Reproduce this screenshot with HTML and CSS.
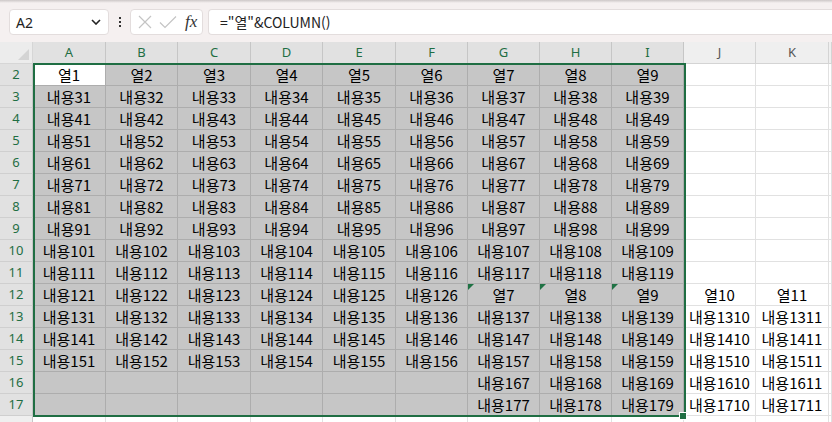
FILE: index.html
```html
<!DOCTYPE html>
<html lang="ko">
<head>
<meta charset="utf-8">
<title>Sheet</title>
<link rel="stylesheet" href="styles.css">
</head>
<body>
<div class="strip"></div>
<div class="fbar">
  <div class="namebox"><span>A2</span>
    <svg class="chev" width="10" height="6" viewBox="0 0 10 6"><path d="M1 1l4 4 4-4" fill="none" stroke="#222" stroke-width="1.6"/></svg>
  </div>
  <div class="dots"><i></i><i></i><i></i></div>
  <div class="fxbox">
    <svg width="16" height="16" viewBox="0 0 16 16"><path d="M2 2l12 12M14 2L2 14" stroke="#c4c4c4" stroke-width="1.2" fill="none"/></svg>
    <svg width="18" height="16" viewBox="0 0 18 16"><path d="M1 8.5l5 5 11-11" stroke="#c4c4c4" stroke-width="1.2" fill="none"/></svg>
    <span class="fx">fx</span>
  </div>
  <div class="formula">="열"&amp;COLUMN()</div>
</div>
<div class="sheet">
  <div class="corner"></div>
  <div class="ch s">A</div><div class="ch s">B</div><div class="ch s">C</div><div class="ch s">D</div><div class="ch s">E</div><div class="ch s">F</div><div class="ch s">G</div><div class="ch s">H</div><div class="ch s">I</div><div class="ch">J</div><div class="ch">K</div><div class="ch"></div>

  <div class="rh">2</div><div class="c a">열1</div><div class="c g">열2</div><div class="c g">열3</div><div class="c g">열4</div><div class="c g">열5</div><div class="c g">열6</div><div class="c g">열7</div><div class="c g">열8</div><div class="c g gr">열9</div><div class="c"></div><div class="c"></div><div class="c"></div>

  <div class="rh">3</div><div class="c g">내용31</div><div class="c g">내용32</div><div class="c g">내용33</div><div class="c g">내용34</div><div class="c g">내용35</div><div class="c g">내용36</div><div class="c g">내용37</div><div class="c g">내용38</div><div class="c g gr">내용39</div><div class="c"></div><div class="c"></div><div class="c"></div>

  <div class="rh">4</div><div class="c g">내용41</div><div class="c g">내용42</div><div class="c g">내용43</div><div class="c g">내용44</div><div class="c g">내용45</div><div class="c g">내용46</div><div class="c g">내용47</div><div class="c g">내용48</div><div class="c g gr">내용49</div><div class="c"></div><div class="c"></div><div class="c"></div>

  <div class="rh">5</div><div class="c g">내용51</div><div class="c g">내용52</div><div class="c g">내용53</div><div class="c g">내용54</div><div class="c g">내용55</div><div class="c g">내용56</div><div class="c g">내용57</div><div class="c g">내용58</div><div class="c g gr">내용59</div><div class="c"></div><div class="c"></div><div class="c"></div>

  <div class="rh">6</div><div class="c g">내용61</div><div class="c g">내용62</div><div class="c g">내용63</div><div class="c g">내용64</div><div class="c g">내용65</div><div class="c g">내용66</div><div class="c g">내용67</div><div class="c g">내용68</div><div class="c g gr">내용69</div><div class="c"></div><div class="c"></div><div class="c"></div>

  <div class="rh">7</div><div class="c g">내용71</div><div class="c g">내용72</div><div class="c g">내용73</div><div class="c g">내용74</div><div class="c g">내용75</div><div class="c g">내용76</div><div class="c g">내용77</div><div class="c g">내용78</div><div class="c g gr">내용79</div><div class="c"></div><div class="c"></div><div class="c"></div>

  <div class="rh">8</div><div class="c g">내용81</div><div class="c g">내용82</div><div class="c g">내용83</div><div class="c g">내용84</div><div class="c g">내용85</div><div class="c g">내용86</div><div class="c g">내용87</div><div class="c g">내용88</div><div class="c g gr">내용89</div><div class="c"></div><div class="c"></div><div class="c"></div>

  <div class="rh">9</div><div class="c g">내용91</div><div class="c g">내용92</div><div class="c g">내용93</div><div class="c g">내용94</div><div class="c g">내용95</div><div class="c g">내용96</div><div class="c g">내용97</div><div class="c g">내용98</div><div class="c g gr">내용99</div><div class="c"></div><div class="c"></div><div class="c"></div>

  <div class="rh">10</div><div class="c g">내용101</div><div class="c g">내용102</div><div class="c g">내용103</div><div class="c g">내용104</div><div class="c g">내용105</div><div class="c g">내용106</div><div class="c g">내용107</div><div class="c g">내용108</div><div class="c g gr">내용109</div><div class="c"></div><div class="c"></div><div class="c"></div>

  <div class="rh">11</div><div class="c g">내용111</div><div class="c g">내용112</div><div class="c g">내용113</div><div class="c g">내용114</div><div class="c g">내용115</div><div class="c g">내용116</div><div class="c g">내용117</div><div class="c g">내용118</div><div class="c g gr">내용119</div><div class="c"></div><div class="c"></div><div class="c"></div>

  <div class="rh">12</div><div class="c g">내용121</div><div class="c g">내용122</div><div class="c g">내용123</div><div class="c g">내용124</div><div class="c g">내용125</div><div class="c g">내용126</div><div class="c g tri">열7</div><div class="c g tri">열8</div><div class="c g gr tri">열9</div><div class="c">열10</div><div class="c">열11</div><div class="c"></div>

  <div class="rh">13</div><div class="c g">내용131</div><div class="c g">내용132</div><div class="c g">내용133</div><div class="c g">내용134</div><div class="c g">내용135</div><div class="c g">내용136</div><div class="c g">내용137</div><div class="c g">내용138</div><div class="c g gr">내용139</div><div class="c">내용1310</div><div class="c">내용1311</div><div class="c"></div>

  <div class="rh">14</div><div class="c g">내용141</div><div class="c g">내용142</div><div class="c g">내용143</div><div class="c g">내용144</div><div class="c g">내용145</div><div class="c g">내용146</div><div class="c g">내용147</div><div class="c g">내용148</div><div class="c g gr">내용149</div><div class="c">내용1410</div><div class="c">내용1411</div><div class="c"></div>

  <div class="rh">15</div><div class="c g">내용151</div><div class="c g">내용152</div><div class="c g">내용153</div><div class="c g">내용154</div><div class="c g">내용155</div><div class="c g">내용156</div><div class="c g">내용157</div><div class="c g">내용158</div><div class="c g gr">내용159</div><div class="c">내용1510</div><div class="c">내용1511</div><div class="c"></div>

  <div class="rh">16</div><div class="c g"></div><div class="c g"></div><div class="c g"></div><div class="c g"></div><div class="c g"></div><div class="c g"></div><div class="c g">내용167</div><div class="c g">내용168</div><div class="c g gr">내용169</div><div class="c">내용1610</div><div class="c">내용1611</div><div class="c"></div>

  <div class="rh">17</div><div class="c g"></div><div class="c g"></div><div class="c g"></div><div class="c g"></div><div class="c g"></div><div class="c g"></div><div class="c g">내용177</div><div class="c g">내용178</div><div class="c g gr">내용179</div><div class="c">내용1710</div><div class="c">내용1711</div><div class="c"></div>

  <div class="rh n"></div><div class="c"></div><div class="c"></div><div class="c"></div><div class="c"></div><div class="c"></div><div class="c"></div><div class="c"></div><div class="c"></div><div class="c"></div><div class="c"></div><div class="c"></div><div class="c"></div>

  <div class="selection"><div class="handle"></div></div>
</div>
</body>
</html>
```

FILE: styles.css
```css
html, body {
  margin: 0;
  padding: 0;
}
body {
  width: 832px;
  height: 422px;
  overflow: hidden;
  background: #f5f0f0;
  font-family: "Noto Sans CJK KR", "Noto Sans", sans-serif;
  color: #000;
}
.strip {
  height: 3px;
  background: linear-gradient(#cdc8c8, #f5f0f0);
}
.fbar {
  display: flex;
  align-items: center;
  height: 26px;
  margin-top: 6px;
  margin-bottom: 7px;
  padding-left: 9px;
}
.namebox {
  width: 100px;
  height: 26px;
  box-sizing: border-box;
  background: #fff;
  border: 1px solid #e3dddd;
  border-radius: 4px;
  display: flex;
  align-items: center;
  justify-content: space-between;
  padding: 0 7px 0 6px;
  font-family: "Noto Sans", sans-serif;
  font-size: 14px;
  color: #222;
}
.dots {
  width: 21px;
  display: flex;
  flex-direction: column;
  align-items: center;
  gap: 2px;
}
.dots i {
  width: 2px;
  height: 2px;
  background: #333;
  display: block;
}
.fxbox {
  width: 73px;
  height: 26px;
  box-sizing: border-box;
  background: #fff;
  border: 1px solid #e3dddd;
  border-radius: 4px;
  display: flex;
  align-items: center;
  padding-left: 6px;
  gap: 6px;
}
.fx {
  font-family: "Liberation Serif", serif;
  font-style: italic;
  font-size: 17px;
  color: #333;
  margin-left: 2px;
}
.formula {
  flex: 1;
  height: 26px;
  box-sizing: border-box;
  margin-left: 5px;
  background: #fff;
  border: 1px solid #e3dddd;
  border-right: none;
  border-radius: 4px 0 0 4px;
  padding-left: 11px;
  line-height: 24px;
  font-size: 14px;
  color: #222;
}
.sheet {
  position: relative;
  display: grid;
  grid-template-columns: 33px 73px 72px 73px 72px 73px 72px 72px 72px 72px 72px 73px 1fr;
  grid-template-rows: 22px;
  grid-auto-rows: 22px;
  background: #fff;
}
.corner {
  position: relative;
  background: #ececec;
  border-right: 1px solid #d6d6d6;
  border-bottom: 1px solid #d6d6d6;
}
.corner::after {
  content: "";
  position: absolute;
  right: 3px;
  bottom: 3px;
  border-left: 11px solid transparent;
  border-bottom: 11px solid #d4d4d4;
}
.ch {
  background: #efefef;
  border-right: 1px solid #d4d4d4;
  border-bottom: 1px solid #d4d4d4;
  font-family: "Noto Sans", sans-serif;
  font-size: 13px;
  line-height: 21px;
  text-align: center;
  color: #555;
}
.ch.s {
  background: #e1e1e1;
  color: #1f6e43;
  border-right-color: #c6c6c6;
}
.rh {
  background: #e1e1e1;
  border-right: 1px solid #c6c6c6;
  border-bottom: 1px solid #cfcfcf;
  font-family: "Noto Sans", sans-serif;
  font-size: 13px;
  line-height: 21px;
  text-align: center;
  color: #1f6e43;
}
.rh.n {
  background: #efefef;
  color: #555;
}
.c {
  box-sizing: border-box;
  border-right: 1px solid #e1e1e1;
  border-bottom: 1px solid #e1e1e1;
  font-size: 15px;
  line-height: 21px;
  text-align: center;
  white-space: nowrap;
  overflow: hidden;
}
.c.g {
  background: #c6c6c6;
  border-color: #adadad;
}
.c.a {
  background: #fff;
  border-right-color: #adadad;
  border-bottom-color: #adadad;
}
.tri {
  position: relative;
}
.tri::before {
  content: "";
  position: absolute;
  left: 0;
  top: 0;
  border-top: 6px solid #1f7244;
  border-right: 6px solid transparent;
}
.selection {
  position: absolute;
  left: 33px;
  top: 21px;
  width: 653px;
  height: 354px;
  box-sizing: border-box;
  border: 2px solid #1f6e43;
  pointer-events: none;
}
.handle {
  position: absolute;
  right: -3px;
  bottom: -5px;
  width: 6px;
  height: 6px;
  background: #1f6e43;
  border: 1px solid #fff;
}
```
